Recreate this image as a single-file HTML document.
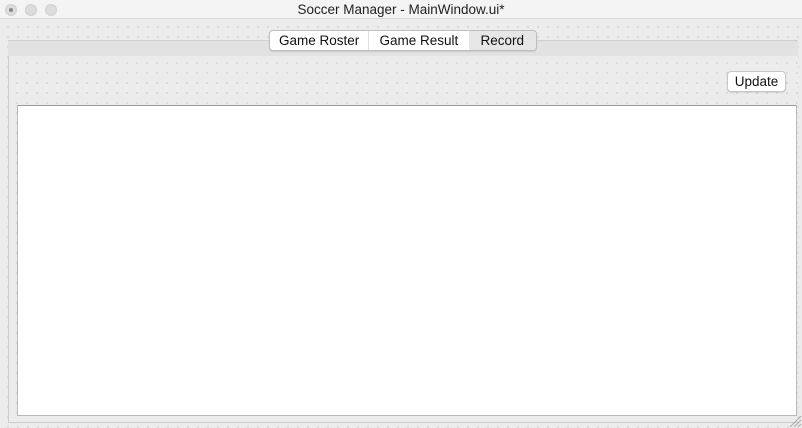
<!DOCTYPE html>
<html><head><style>
*{margin:0;padding:0;box-sizing:border-box}
body{width:802px;height:428px;overflow:hidden;background:#ececec;font-family:"Liberation Sans",sans-serif;position:relative}
.dots{background-color:#ececec;background-image:radial-gradient(circle,#c4c4c4 0.6px,transparent 0.9px);background-size:10px 10px;background-position:3px 2px}
#title{position:absolute;left:0;top:0;width:802px;height:19px;background:#f4f4f4;border-bottom:1px solid #d8d8d8;text-align:center;font-size:13.5px;line-height:19px;color:#222}
.btn{position:absolute;top:4px;width:12px;height:12px;border-radius:50%;background:#dcdcdc;border:1px solid #cfcfcf}
#main{position:absolute;left:0;top:20px;width:802px;height:408px}
#pane{position:absolute;left:8px;top:40px;width:790px;height:383px;border:1px solid #cfcfcf;border-right:none}
#band{position:absolute;left:8px;top:40px;width:790px;height:16px;background:#e2e2e2;border-top:1px solid #cfcfcf}
#inner{position:absolute;left:9px;top:56px;width:789px;height:366px}
#tabs{position:absolute;left:269px;top:30px;width:268px;height:21px;border:1px solid #bdbdbd;border-radius:4px;background:#fff;display:flex;overflow:hidden;font-size:13.5px;box-shadow:0 1px 1px rgba(0,0,0,.1)}
#tabs div{line-height:19px;text-align:center;color:#111}
#upd{position:absolute;left:727px;top:71px;width:59px;height:21px;border:1px solid #c6c6c6;border-radius:4px;background:#fff;font-size:13.5px;text-align:center;line-height:19px;color:#111;box-shadow:0 1px 1px rgba(0,0,0,.1)}
#white{position:absolute;left:17px;top:105px;width:780px;height:311px;background:#fff;border:1px solid #b9b9b9;border-top:1px solid #9a9a9a}
</style></head><body>
<div id="main" class="dots"></div>
<div id="title">Soccer Manager - MainWindow.ui*</div>
<div class="btn" style="left:5px"><div style="width:4px;height:4px;border-radius:50%;background:#888;margin:3px"></div></div>
<div class="btn" style="left:25px"></div>
<div class="btn" style="left:45px"></div>
<div id="pane"></div>
<div id="band"></div>
<div id="inner" class="dots"></div>
<div id="tabs"><div style="width:100px;border-right:1px solid #e0e0e0">Game Roster</div><div style="width:100px">Game Result</div><div style="width:68px;background:#e6e6e6">Record</div></div>
<div id="upd">Update</div>
<div id="white"></div>
<svg style="position:absolute;left:788px;top:414px" width="14" height="14"><path d="M2 13L13 2M6 13L13 6M10 13L13 10" stroke="#aaa" stroke-width="1"/></svg>
</body></html>
